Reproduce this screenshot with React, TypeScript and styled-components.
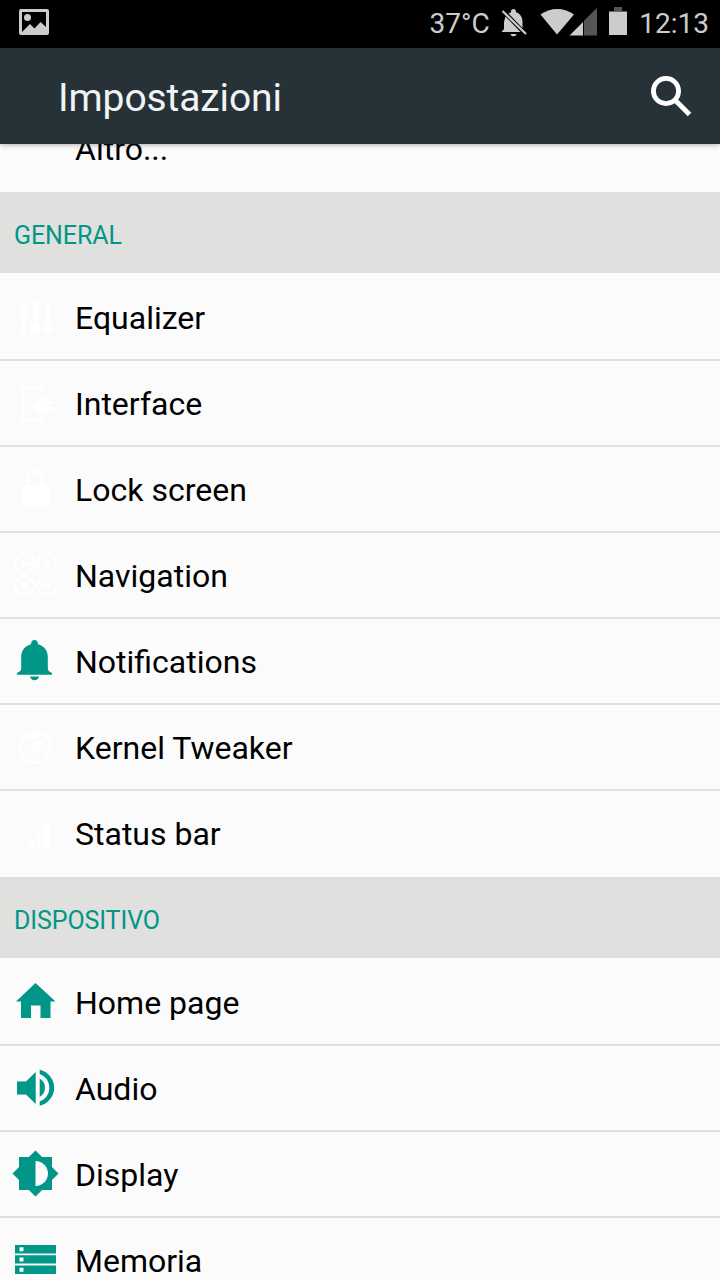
import React from 'react';
import styled, { createGlobalStyle } from 'styled-components';

const GlobalStyle = createGlobalStyle`
  * { box-sizing: border-box; }
  html, body { margin: 0; background: #fbfbfb; }
  body { overflow: hidden; font-family: Roboto, "Liberation Sans", sans-serif; }
`;

const Screen = styled.main`
  display: flex;
  flex-direction: column;
  width: 720px;
  height: 1280px;
  overflow: hidden;
  background: #fbfbfb;
`;

const StatusBar = styled.div`
  display: flex;
  flex: none;
  align-items: center;
  justify-content: space-between;
  height: 48px;
  padding: 0 11px 0 16px;
  background: #000;
  color: #cccccc;
  font-size: 28px;
  line-height: 48px;
  white-space: nowrap;
`;

const StatusGroup = styled.div`
  display: flex;
  align-items: center;
`;

const StatusIcons = styled.svg`
  display: block;
  width: 149.5px;
  height: 48px;
`;

const PhotoIcon = styled.svg`
  display: block;
  width: 36px;
  height: 48px;
`;

const Toolbar = styled.header`
  position: relative;
  z-index: 1;
  display: flex;
  flex: none;
  align-items: center;
  justify-content: space-between;
  height: 96px;
  padding: 3px 24px 0 58px;
  background: #263238;
  box-shadow: 0 1px 5px rgba(0, 0, 0, 0.3);
`;

const Title = styled.h1`
  margin: 0;
  color: #f1f4f5;
  font-size: 39px;
  font-weight: 400;
  letter-spacing: -0.1px;
  line-height: 48px;
`;

const SearchButton = styled.button`
  display: block;
  width: 48px;
  height: 48px;
  margin-top: -3px;
  padding: 0;
  border: 0;
  background: none;
`;

const List = styled.div`
  display: flex;
  flex: 1;
  flex-direction: column;
  min-height: 0;
  margin-top: -38px;
  overflow: hidden;
`;

const SectionHeader = styled.h2`
  flex: none;
  height: 83px;
  margin: 0;
  padding: 5px 14px 0;
  border-bottom: 2px solid #fbfbfb;
  background: #e0e0de;
  color: #009688;
  font-size: 25px;
  font-weight: 400;
  letter-spacing: -0.1px;
  line-height: 78px;
`;

const Row = styled.div<{ $divider: boolean }>`
  display: flex;
  flex: none;
  height: 86px;
  border-bottom: ${(p) => (p.$divider ? '2px solid #e0e0e0' : '0')};
`;

const RowIcon = styled.svg<{ $muted?: boolean }>`
  flex: none;
  width: 75px;
  height: 84px;
  color: ${(p) => (p.$muted ? '#ffffff' : '#009688')};
`;

const RowLabel = styled.span`
  color: #000;
  font-size: 32px;
  line-height: 86px;
  white-space: nowrap;
`;

type Item = { label: string; muted?: boolean; icon?: React.ReactNode };

const general: Item[] = [
  {
    label: 'Equalizer',
    muted: true,
    icon: (
      <path fill="currentColor" d="M21.500 26h4v8h3.500v4h-3.500v20h-4V38H18v-4h3.500zM33.500 26h4v24h3v8h-10v-8h3zM46 26h4v24h3v8H43v-8h3z" />
    ),
  },
  {
    label: 'Interface',
    muted: true,
    icon: (
      <>
        <path fill="none" stroke="currentColor" strokeWidth="3" d="M42.500 32v-3l-3-2.500H24a1.500 1.500 0 0 0-1.500 1.500v29a1.500 1.500 0 0 0 1.500 1.500h17.500v-6" />
        <path fill="currentColor" d="M40 36h3v4h3v-4h3v4h5v3h-5v3h4v3h-6v3h-4v-3h-3v4h-3v-4h-4v-5h4v-4h3z" />
      </>
    ),
  },
  {
    label: 'Lock screen',
    muted: true,
    icon: (
      <>
        <path fill="none" stroke="currentColor" strokeWidth="3.5" d="M28 36v-5a7 7 0 0 1 14 0v8" />
        <rect x="21" y="38" width="28" height="20.500" rx="2" fill="currentColor" />
      </>
    ),
  },
  {
    label: 'Navigation',
    muted: true,
    icon: (
      <>
        <g fill="none" stroke="currentColor" strokeWidth="2">
          <circle cx="24.500" cy="30.500" r="9.500" />
          <circle cx="46.500" cy="30.500" r="9.500" />
          <circle cx="24.500" cy="52.500" r="9.500" />
          <circle cx="46.500" cy="52.500" r="9.500" />
        </g>
        <path fill="currentColor" d="M20 30.500l4-3.500v2h5v3h-5v2zM44.500 27h4v7h-4zM24.500 48l4 4.500h-2v4h-4v-4h-2zM42 50.500h9v4h-9z" />
      </>
    ),
  },
  {
    label: 'Notifications',
    icon: (
      <path fill="currentColor" d="M34.500 21c-2 0-3.400 1.400-3.400 3.200v1C25 26.700 21.200 31.500 21.200 38v11.500c0 2-1.300 3-4.200 4.500v1.700h35V54c-2.900-1.500-4.200-2.500-4.200-4.500V38c0-6.500-3.800-11.300-9.900-12.800v-1c0-1.800-1.400-3.200-3.400-3.200zM30 57.500h9c-.5 2.400-2.200 3.700-4.500 3.700S30.500 59.900 30 57.500z" />
    ),
  },
  {
    label: 'Kernel Tweaker',
    muted: true,
    icon: (
      <>
        <circle cx="35" cy="42.500" r="15" fill="none" stroke="currentColor" strokeWidth="2.500" />
        <path fill="currentColor" d="M23 34c5-6 13-9 20-5l-7 6c-5-2-9 0-13-1zM45 31l-6 12a4 4 0 1 1-5-4z" />
      </>
    ),
  },
  {
    label: 'Status bar',
    muted: true,
    icon: <path fill="currentColor" d="M23 58l5-5.500V58zM30 50.500l4.500-5V58H30zM36.500 43.500l4.500-5V58h-4.500zM43 36l6.500-8.500V58H43z" />,
  },
];

const device: Item[] = [
  {
    label: 'Home page',
    icon: <path fill="currentColor" d="M35.500 23L55.500 41.500h-5V58H40.500V45.500h-9.500V58H21V41.500h-5z" />,
  },
  {
    label: 'Audio',
    icon: (
      <>
        <path fill="currentColor" d="M17 35.500h9L35.700 26v32L26 48.500h-9zM39.700 32.500c3.300 1.800 5.300 5.300 5.300 9.200s-2 7.400-5.300 9.200z" />
        <path fill="currentColor" d="M39.700 23.700C48 25.500 54.200 33 54.200 41.700S48 57.900 39.700 59.700v-4.500c6-1.800 9.600-7.200 9.600-13.500S45.700 30 39.700 28.200z" />
      </>
    ),
  },
  {
    label: 'Display',
    icon: (
      <path fill="currentColor" fillRule="evenodd" d="M35.500 18.500l6.600 6.600H52v9.800l6.500 6.600-6.500 6.600V58h-9.900l-6.600 6.500-6.600-6.500H19v-9.900l-6.500-6.600 6.500-6.600v-9.800h9.900zM35.500 29v25c7 0 12.500-5.600 12.500-12.500S42.500 29 35.500 29z" />
    ),
  },
  {
    label: 'Memoria',
    icon: (
      <path fill="currentColor" fillRule="evenodd" d="M15 27h41v8.500H15zM15 37.300h41v8.200H15zM15 47.500h41V56H15zM19.500 29.200v4h4v-4zM19.500 39.500v4h4v-4zM19.500 49.700v4h4v-4z" />
    ),
  },
];

function SettingsRow({ item, divider }: { item: Item; divider: boolean }) {
  return (
    <Row $divider={divider}>
      <RowIcon $muted={item.muted} viewBox="0 0 75 84">{item.icon}</RowIcon>
      <RowLabel>{item.label}</RowLabel>
    </Row>
  );
}

function Section({ title, items }: { title: string; items: Item[] }) {
  return (
    <>
      <SectionHeader>{title}</SectionHeader>
      {items.map((item, i) => (
        <SettingsRow key={item.label} item={item} divider={i < items.length - 1} />
      ))}
    </>
  );
}

export default function App() {
  return (
    <Screen>
      <GlobalStyle />
      <StatusBar>
        <PhotoIcon viewBox="0 0 36 48">
          <path fill="#cccccc" fillRule="evenodd" d="M5 9h26a2 2 0 0 1 2 2v22a2 2 0 0 1-2 2H5a2 2 0 0 1-2-2V11a2 2 0 0 1 2-2zM6 12v20l8-8 4.500 4.500 6-6.500 5.500 5V12z" />
          <circle cx="11.500" cy="17.500" r="3.500" fill="#cccccc" />
        </PhotoIcon>
        <StatusGroup>
          <span>37°C</span>
          <StatusIcons viewBox="490 0 149.5 48">
            <path fill="#cccccc" d="M513.500 9c-1.500 0-2.500 1-2.500 2.500v.8l-2.500 1.200L522.500 28V22c0-5-2.500-8.500-6.500-9.700v-.8c0-1.500-1-2.500-2.500-2.500zM505.500 16.500l-1.500 5.500v7l-2.500 3H520.500zM510.500 34h6c-.4 1.500-1.500 2.300-3 2.300s-2.600-.8-3-2.300z" />
            <path fill="none" stroke="#cccccc" strokeWidth="2.200" d="M502.500 11L526 34" />
            <path fill="#cccccc" d="M540.500 14.500C550 7 564.500 7 574 14.500L557 34.500z" />
            <path fill="#555" d="M584 20.500L597 8v27.500h-13z" />
            <path fill="#cccccc" d="M583 22v13.500h-13.500z" />
            <path fill="#555" d="M614 7h8v4h-8z" />
            <path fill="#cccccc" d="M609 11.500h18v23.500h-18z" />
          </StatusIcons>
          <span>12:13</span>
        </StatusGroup>
      </StatusBar>
      <Toolbar>
        <Title>Impostazioni</Title>
        <SearchButton aria-label="Cerca">
          <svg width="48" height="48" viewBox="648 72 48 48">
            <circle cx="666" cy="91" r="12.600" fill="none" stroke="#fff" strokeWidth="4.800" />
            <path stroke="#fff" strokeWidth="5" d="M674.500 99.500l15 15" />
          </svg>
        </SearchButton>
      </Toolbar>
      <List>
        <SettingsRow item={{ label: 'Altro...' }} divider={false} />
        <Section title="GENERAL" items={general} />
        <Section title="DISPOSITIVO" items={device} />
      </List>
    </Screen>
  );
}
